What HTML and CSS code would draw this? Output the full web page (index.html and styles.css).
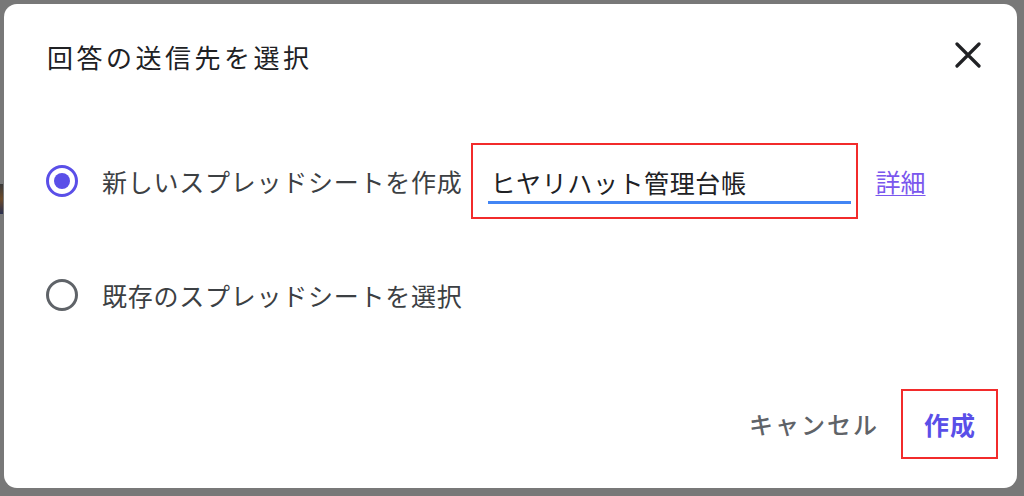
FILE: index.html
```html
<!DOCTYPE html>
<html lang="ja">
<head>
<meta charset="utf-8">
<title>回答の送信先を選択</title>
<link rel="stylesheet" href="styles.css">
</head>
<body>
<div class="backdrop-peek"></div>
<div class="dialog">
  <div class="header">
    <h1 class="title">回答の送信先を選択</h1>
    <button class="close" aria-label="閉じる">
      <svg width="26" height="26" viewBox="0 0 26 26"><path d="M2 2 L24 24 M24 2 L2 24" stroke="#202124" stroke-width="3.2" stroke-linecap="round"/></svg>
    </button>
  </div>
  <div class="options">
    <div class="option option-first">
      <span class="radio radio-on"><span class="dot"></span></span>
      <span class="label">新しいスプレッドシートを作成</span>
      <div class="mark input-mark">
        <div class="field">ヒヤリハット管理台帳</div>
      </div>
      <a class="details" href="#">詳細</a>
    </div>
    <div class="option option-second">
      <span class="radio"></span>
      <span class="label">既存のスプレッドシートを選択</span>
    </div>
  </div>
  <div class="footer">
    <button class="btn btn-cancel">キャンセル</button>
    <div class="mark btn-mark">
      <button class="btn btn-primary">作成</button>
    </div>
  </div>
</div>
</body>
</html>
```
FILE: styles.css
```css
html, body {
  margin: 0;
  padding: 0;
}
body {
  width: 1024px;
  height: 496px;
  background: #787878;
  font-family: "Noto Sans CJK JP", "Noto Sans", sans-serif;
  overflow: hidden;
  position: relative;
}
.backdrop-peek {
  position: absolute;
  left: 0;
  top: 184px;
  width: 3px;
  height: 30px;
  background: linear-gradient(#3a3a3a, #6b4a2a 50%, #2a3050);
}
.dialog {
  position: relative;
  margin: 4px 0 0 4px;
  width: 1013px;
  height: 484px;
  background: #fff;
  border-radius: 13px;
  display: flex;
  flex-direction: column;
  box-sizing: border-box;
}
.header {
  display: flex;
  align-items: center;
  justify-content: space-between;
  padding: 37px 36px 0 43px;
}
.title {
  margin: 0;
  font-size: 26px;
  line-height: 32px;
  font-weight: 400;
  letter-spacing: 3.5px;
  color: #202124;
}
.close {
  border: 0;
  background: none;
  padding: 0;
  margin-top: -4px;
  width: 26px;
  height: 26px;
  display: flex;
}
.options {
  display: flex;
  flex-direction: column;
  padding-left: 42px;
  margin-top: 70px;
}
.option {
  display: flex;
  align-items: center;
}
.option-second {
  margin-top: 56px;
  height: 40px;
}
.radio {
  width: 32px;
  height: 32px;
  box-sizing: border-box;
  border: 3px solid #5f6368;
  border-radius: 50%;
  display: flex;
  align-items: center;
  justify-content: center;
  flex: none;
}
.radio-on {
  border-color: #5a4fe8;
}
.dot {
  width: 16px;
  height: 16px;
  border-radius: 50%;
  background: #5a4fe8;
}
.label {
  margin-left: 24px;
  font-size: 25px;
  line-height: 32px;
  letter-spacing: 0.75px;
  color: #3c4043;
}
.mark {
  border: 2px solid #f22b2b;
}
.input-mark {
  margin-left: 8px;
  padding: 0 5px 13px 15px;
}
.field {
  width: 363px;
  box-sizing: border-box;
  padding: 21px 0 0 3px;
  height: 59px;
  font-size: 25px;
  line-height: 32px;
  letter-spacing: 0.6px;
  color: #202124;
  border-bottom: 3px solid #4285f4;
}
.details {
  margin-left: 18px;
  font-size: 25px;
  line-height: 32px;
  color: #7a57ee;
  text-decoration: underline;
  text-underline-offset: 3px;
  text-decoration-thickness: 1px;
}
.footer {
  margin-top: auto;
  display: flex;
  align-items: center;
  justify-content: flex-end;
  padding: 0 19px 29px 0;
}
.btn {
  border: 0;
  background: none;
  font-family: inherit;
  font-size: 24px;
  line-height: 32px;
  letter-spacing: 2px;
  font-weight: 500;
  padding: 0;
  cursor: pointer;
}
.btn-cancel {
  color: #5f6368;
  margin-right: 22px;
}
.btn-mark {
  height: 66px;
  display: flex;
  align-items: center;
  padding: 0 20px 0 21px;
}
.btn-primary {
  color: #5a4fe8;
  font-weight: 700;
  font-size: 25px;
  letter-spacing: 1px;
}
```
